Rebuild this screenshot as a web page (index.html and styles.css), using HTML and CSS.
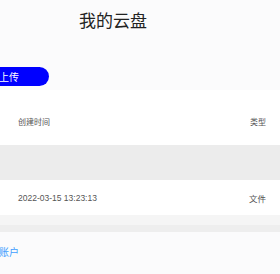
FILE: index.html
```html
<!DOCTYPE html>
<html lang="zh">
<head>
<meta charset="utf-8">
<link rel="stylesheet" href="styles.css">
</head>
<body>
<div class="page">
  <h1 class="title">我的云盘</h1>
  <div class="toolbar">
    <button class="upload">上传</button>
  </div>
  <div class="table">
    <div class="row head">
      <span class="c1">创建时间</span>
      <span class="c2">类型</span>
    </div>
    <div class="row empty"></div>
    <div class="row">
      <span class="c1">2022-03-15 13:23:13</span>
      <span class="c2">文件</span>
    </div>
    <div class="foot1"></div>
    <div class="foot2"></div>
  </div>
  <a class="account">账户</a>
</div>
</body>
</html>
```
FILE: styles.css
```css
html, body {
  margin: 0;
  padding: 0;
  background: #fbfbfc;
  font-family: "Liberation Sans", "Noto Sans CJK SC", sans-serif;
  overflow: hidden;
}
.page {
  width: 280px;
  height: 274px;
}
.title {
  margin: 0;
  padding-top: 8px;
  padding-left: 79px;
  font-family: "Noto Sans CJK SC", sans-serif;
  font-size: 17px;
  font-weight: 400;
  line-height: 24px;
  color: #222;
}
.toolbar {
  margin-top: 35px;
  height: 20px;
}
.upload {
  display: block;
  margin-left: -20px;
  width: 69px;
  height: 19px;
  border: 0;
  border-radius: 10px;
  background: #0000ff;
  color: #fff;
  font-family: "Noto Sans CJK SC", sans-serif;
  font-size: 10px;
  text-align: left;
  padding: 0 0 0 19px;
  line-height: 19px;
}
.table {
  margin-top: 3px;
}
.row {
  height: 35px;
  background: #fff;
  display: flex;
  align-items: center;
  justify-content: space-between;
  padding: 0 14px 0 18px;
  font-size: 8.5px;
  color: #555;
}
.row.head {
  height: 55px;
  padding-top: 8px;
  box-sizing: border-box;
  font-size: 8px;
}
.row.empty {
  background: #ececec;
}
.foot1 {
  height: 10px;
  background: #f5f5f5;
}
.foot2 {
  height: 7px;
  background: #eeeeee;
}
.account {
  display: block;
  margin-top: 13px;
  margin-left: -1px;
  font-family: "Noto Sans CJK SC", sans-serif;
  font-size: 10px;
  color: #409eff;
  line-height: 14px;
}
```
